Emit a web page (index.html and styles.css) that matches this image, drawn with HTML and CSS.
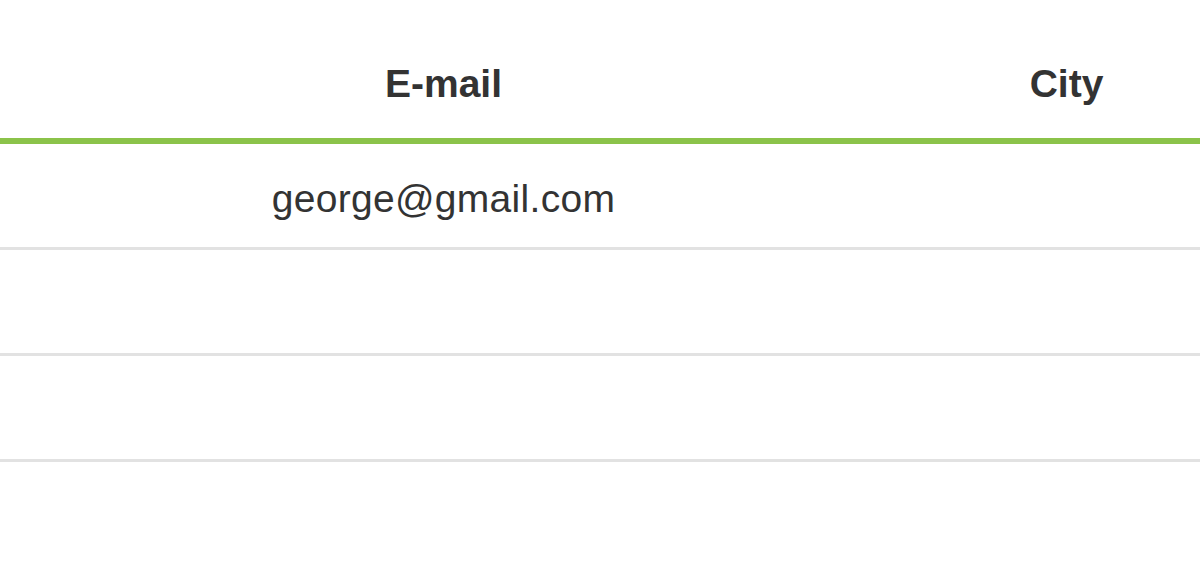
FILE: index.html
```html
<!DOCTYPE html>
<html lang="en">
<head>
    <meta charset="UTF-8">
    <meta name="viewport" content="width=device-width, initial-scale=1.0">
    <title>Contacts</title>
    <link rel="stylesheet" href="styles.css">
</head>
<body>
    <div class="table-wrap">
        <table class="contacts">
            <colgroup>
                <col class="col-name">
                <col class="col-email">
                <col class="col-city">
            </colgroup>
            <thead>
                <tr>
                    <th></th>
                    <th>E-mail</th>
                    <th>City</th>
                </tr>
            </thead>
            <tbody>
                <tr>
                    <td></td>
                    <td>george@gmail.com</td>
                    <td></td>
                </tr>
                <tr>
                    <td></td>
                    <td></td>
                    <td></td>
                </tr>
                <tr>
                    <td></td>
                    <td></td>
                    <td></td>
                </tr>
                <tr class="last">
                    <td></td>
                    <td></td>
                    <td></td>
                </tr>
            </tbody>
        </table>
    </div>
</body>
</html>
```

FILE: styles.css
```css
* {
    margin: 0;
    padding: 0;
    box-sizing: border-box;
}

body {
    font-family: 'Liberation Sans', Arial, sans-serif;
    color: #333;
    background: #fff;
    overflow: hidden;
}

.table-wrap {
    width: 100%;
    overflow: hidden;
}

.contacts {
    width: 1378px;
    table-layout: fixed;
    border-collapse: separate;
    border-spacing: 0;
}

.col-name {
    width: 132px;
}

.col-email,
.col-city {
    width: 623px;
}

.contacts th {
    height: 144px;
    font-size: 39px;
    font-weight: bold;
    text-align: center;
    vertical-align: middle;
    padding-top: 30px;
    border-bottom: 6px solid #8bc34a;
}

.contacts td {
    height: 106px;
    font-size: 39px;
    letter-spacing: 0.3px;
    text-align: center;
    vertical-align: middle;
    padding-top: 6px;
    border-bottom: 3px solid #e2e2e2;
}

.contacts tr.last td {
    border-bottom: none;
}
```
